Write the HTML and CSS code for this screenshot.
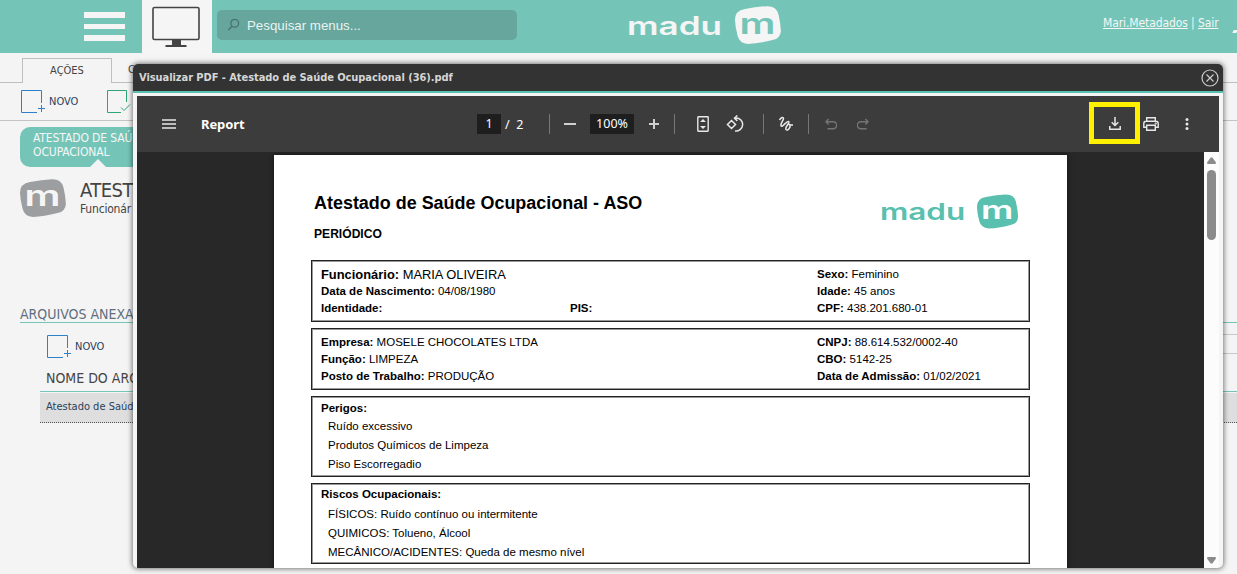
FILE: index.html
```html
<!DOCTYPE html>
<html lang="pt-BR">
<head>
    <meta charset="UTF-8">
    <meta name="viewport" content="width=device-width, initial-scale=1.0">
    <title>Madu</title>
    <link rel="stylesheet" href="styles.css">
</head>
<body>
    <header class="topbar">
        <div class="menu-button"><span></span><span></span><span></span></div>
        <div class="screen-tab">
            <svg width="48" height="41" viewBox="0 0 48 41">
                <rect x="1" y="1.500" width="46" height="32" rx="1.5" fill="none" stroke="#444" stroke-width="1.6"/>
                <path d="M20 33h9v6h5.500v2h-21v-2H20z" fill="#444"/>
            </svg>
        </div>
        <div class="search">
            <svg width="14" height="14" viewBox="0 0 14 14" fill="none" stroke="#49736d" stroke-width="1.300">
                <circle cx="7.700" cy="5.200" r="3.900"/>
                <path d="M5 8.200L1.300 12"/>
            </svg>
            <span>Pesquisar menus...</span>
        </div>
        <svg class="brand" width="156" height="42" viewBox="0 0 156 42">
            <text class="brand-word" x="0" y="28.500" textLength="95" lengthAdjust="spacingAndGlyphs">madu</text>
            <path d="M108 14Q108 4.500 118 3Q130 .6 140 .2Q149.500 0 151.500 8.500Q153.500 17 153.900 25Q153.500 32.500 145.500 34Q132 37.500 121 38Q112.500 37.500 110.500 29.500Q108.300 21 108 14z" fill="#f5f5f5"/>
            <text class="brand-m" x="112.500" y="27.500" textLength="36" lengthAdjust="spacingAndGlyphs">m</text>
        </svg>
        <div class="user-links"><a>Mari.Metadados</a> | <a>Sair</a></div>
        <span class="user-mark"></span>
    </header>

    <nav class="tabs">
        <div class="tab active">AÇÕES</div>
        <div class="tab">C</div>
    </nav>
    <div class="actions">
        <div class="action">
            <svg width="24" height="24" viewBox="0 0 24 24" fill="none" stroke="#2f80c8">
                <path d="M20.500 13V.5H.5v22H16M17 18.500h7M20.500 15v7"/>
            </svg>
            <span>NOVO</span>
        </div>
        <div class="action">
            <svg width="24" height="24" viewBox="0 0 24 24" fill="none" stroke="#2aa772">
                <path d="M19.500 12V.5H.5v22H14M14 17.500l3 3 6-6"/>
            </svg>
        </div>
    </div>

    <main class="content">
        <div class="step">ATESTADO DE SAÚ<br>OCUPACIONAL</div>
        <div class="record">
            <svg width="46" height="39" viewBox="108 0 46 39">
                <path d="M108 14Q108 4.500 118 3Q130 .6 140 .2Q149.500 0 151.500 8.500Q153.500 17 153.900 25Q153.500 32.500 145.500 34Q132 37.500 121 38Q112.500 37.500 110.500 29.500Q108.300 21 108 14z" fill="#9d9e9f"/>
                <text class="record-m" x="112.500" y="27" textLength="36" lengthAdjust="spacingAndGlyphs">m</text>
            </svg>
            <div>
                <div class="record-title">ATEST</div>
                <div class="record-sub">Funcionár</div>
            </div>
        </div>
        <h2 class="section-title">ARQUIVOS ANEXA</h2>
        <div class="panel-line"></div>
        <div class="files-actions">
            <svg width="24" height="24" viewBox="0 0 24 24" fill="none" stroke="#2f80c8">
                <path d="M20.500 13V.5H.5v22H16M17 18.500h7M20.500 15v7"/>
            </svg>
            <span>NOVO</span>
        </div>
        <div class="files">
            <div class="files-head">NOME DO ARQ</div>
            <div class="files-row">Atestado de Saúd</div>
        </div>
    </main>

    <div class="modal">
        <div class="modal-title">
            <span>Visualizar PDF - Atestado de Saúde Ocupacional (36).pdf</span>
            <svg width="18" height="18" viewBox="0 0 18 18" fill="none" stroke="#ccc" stroke-width="1.200">
                <circle cx="9" cy="9" r="8"/>
                <path d="M5.500 5.500l7 7M12.500 5.500l-7 7"/>
            </svg>
        </div>
        <div class="viewer">
            <div class="toolbar">
                <svg class="burger" width="14" height="10" viewBox="0 0 14 10" stroke="#e8e8e8" stroke-width="1.400">
                    <path d="M0 1h14M0 5h14M0 9h14"/>
                </svg>
                <span class="doc-name">Report</span>
                <div class="tools">
                    <span class="page-box">1</span>
                    <span class="page-total">/&nbsp; 2</span>
                    <i class="sep sep-page"></i>
                    <svg class="minus" width="12" height="12" viewBox="0 0 12 12" stroke="#d0d0d0" stroke-width="2"><path d="M0 6h12"/></svg>
                    <span class="zoom-box">100%</span>
                    <svg class="plus" width="12" height="12" viewBox="0 0 12 12" stroke="#d0d0d0" stroke-width="2"><path d="M1 6h10M6 1v10"/></svg>
                    <i class="sep sep-zoom"></i>
                    <svg class="fit" width="12" height="16" viewBox="0 0 12 16">
                        <rect x=".8" y=".8" width="10.400" height="14.400" rx=".6" fill="none" stroke="#e8e8e8" stroke-width="1.400"/>
                        <path d="M3 6l3-3 3 3zM3 10l3 3 3-3z" fill="#e8e8e8"/>
                    </svg>
                    <svg class="rotate" width="18" height="18" viewBox="0 0 18 18" fill="none" stroke="#e8e8e8" stroke-width="1.500">
                        <path d="M5.500 5.500l4 4-4 4-4-4zM8 3h2a6.500 6.500 0 1 1-1 12.900M11.300 .5L8.500 3.200l2.800 2.700"/>
                    </svg>
                    <i class="sep sep-rotate"></i>
                    <svg class="draw" width="16" height="16" viewBox="0 0 16 16" fill="none" stroke="#e8e8e8" stroke-width="1.500">
                        <path d="M1.500 4C3 1.500 5.500.5 5.500 2.500S2 8 3 9.800C4.500 12 8.500 4.500 10.500 5.500S6.500 11 8 13.500C10 15.500 13 11 11.800 8.500C10.500 7.500 9 9 15 9"/>
                    </svg>
                    <i class="sep sep-draw"></i>
                    <svg class="undo" width="12" height="12" viewBox="0 0 12 12" fill="none" stroke="#747474" stroke-width="1.400">
                        <path d="M3.700 1L1 3.800l2.700 2.700M1 3.800h7.200a3.400 3.400 0 0 1 0 6.900H2.500"/>
                    </svg>
                    <svg class="redo" width="12" height="12" viewBox="0 0 12 12" fill="none" stroke="#747474" stroke-width="1.400">
                        <path d="M8.300 1L11 3.800 8.300 6.500M11 3.800H3.800a3.400 3.400 0 0 0 0 6.900h5.700"/>
                    </svg>
                </div>
                <div class="download">
                    <svg width="12" height="13" viewBox="0 0 12 13" fill="none" stroke="#e8e8e8" stroke-width="1.500">
                        <path d="M6 0v8.500M2.700 5.200L6 8.500l3.300-3.300M.8 9v3.200h10.400V9"/>
                    </svg>
                </div>
                <svg class="print" width="16" height="14" viewBox="0 0 16 14" fill="none" stroke="#e8e8e8" stroke-width="1.400">
                    <path d="M3.700 4V.7h8.600V4M3.700 10.300H.8V6.500Q.8 4.200 3 4.200h10q2.200 0 2.200 2.300v3.800h-2.900M3.700 8.300h8.600v5H3.700z"/>
                    <circle cx="12.700" cy="6.500" r=".4"/>
                </svg>
                <svg class="more" width="4" height="12" viewBox="0 0 4 12" fill="#e8e8e8">
                    <circle cx="2" cy="1.500" r="1.500"/><circle cx="2" cy="6" r="1.500"/><circle cx="2" cy="10.500" r="1.500"/>
                </svg>
            </div>
            <div class="stage">
                <article class="sheet">
                    <div class="sheet-head">
                        <div>
                            <h1>Atestado de Saúde Ocupacional - ASO</h1>
                            <h3>PERIÓDICO</h3>
                        </div>
                        <svg class="sheet-logo" width="140" height="38" viewBox="0 0 156 42">
                            <text class="sheet-word" x="0" y="30.500" textLength="95" lengthAdjust="spacingAndGlyphs">madu</text>
                            <g transform="translate(0 2.500)">
                                <path d="M108 14Q108 4.500 118 3Q130 .6 140 .2Q149.500 0 151.500 8.500Q153.500 17 153.900 25Q153.500 32.500 145.500 34Q132 37.500 121 38Q112.500 37.500 110.500 29.500Q108.300 21 108 14z" fill="#59bfae"/>
                                <text class="sheet-m" x="112.500" y="27" textLength="36" lengthAdjust="spacingAndGlyphs">m</text>
                            </g>
                        </svg>
                    </div>
                    <section class="box person">
                        <p class="name"><b>Funcionário:</b> MARIA OLIVEIRA</p><p></p><p><b>Sexo:</b> Feminino</p>
                        <p><b>Data de Nascimento:</b> 04/08/1980</p><p></p><p><b>Idade:</b> 45 anos</p>
                        <p><b>Identidade:</b></p><p><b>PIS:</b></p><p><b>CPF:</b> 438.201.680-01</p>
                    </section>
                    <section class="box person">
                        <p><b>Empresa:</b> MOSELE CHOCOLATES LTDA</p><p></p><p><b>CNPJ:</b> 88.614.532/0002-40</p>
                        <p><b>Função:</b> LIMPEZA</p><p></p><p><b>CBO:</b> 5142-25</p>
                        <p><b>Posto de Trabalho:</b> PRODUÇÃO</p><p></p><p><b>Data de Admissão:</b> 01/02/2021</p>
                    </section>
                    <section class="box list">
                        <h4>Perigos:</h4>
                        <p>Ruído excessivo</p>
                        <p>Produtos Químicos de Limpeza</p>
                        <p>Piso Escorregadio</p>
                    </section>
                    <section class="box list risks">
                        <h4>Riscos Ocupacionais:</h4>
                        <p>FÍSICOS: Ruído contínuo ou intermitente</p>
                        <p>QUIMICOS: Tolueno, Álcool</p>
                        <p>MECÂNICO/ACIDENTES: Queda de mesmo nível</p>
                    </section>
                </article>
                <div class="scrollbar">
                    <svg width="9" height="7" viewBox="0 0 9 7" fill="#8b8b8b"><path d="M3.700.5h1.600L9 5.500 8.500 7h-8L0 5.500z"/></svg>
                    <span class="thumb"></span>
                    <svg class="down" width="9" height="7" viewBox="0 0 9 7" fill="#8b8b8b"><path d="M3.700 6.500h1.600L9 1.500 8.500 0h-8L0 1.500z"/></svg>
                </div>
            </div>
        </div>
    </div>
</body>
</html>
```
FILE: styles.css
```css
* {
    box-sizing: border-box;
}

body {
    margin: 0;
    height: 574px;
    overflow: hidden;
    background: #f4f4f4;
    font-family: "DejaVu Sans Condensed", "Noto Sans", sans-serif;
    font-size: 11px;
    color: #444;
}

svg {
    display: block;
    flex: none;
}

h1, h2, h3, h4, p {
    margin: 0;
}

/* header */
.topbar {
    display: flex;
    height: 53px;
    background: #74c5b8;
}

.menu-button {
    display: flex;
    flex-direction: column;
    gap: 6px;
    width: 41px;
    margin: 12px 17px 0 84px;
}

.menu-button span {
    height: 5.500px;
    background: #f5f5f5;
}

.screen-tab {
    width: 70px;
    padding: 6px 10px;
    background: #f5f5f5;
}

.search {
    display: flex;
    align-items: center;
    gap: 6px;
    width: 300px;
    height: 30px;
    margin: 10px 0 0 5px;
    padding-left: 10px;
    border-radius: 5px;
    background: #66a69d;
    color: #eaf3f1;
    font: 13.300px "Liberation Sans", sans-serif;
}

.brand {
    margin: 6px 0 0 110px;
}

.brand-word, .brand-m, .record-m, .sheet-word, .sheet-m {
    font-family: Inter, sans-serif;
    font-weight: 600;
    font-size: 25px;
    fill: #f5f5f5;
}

.brand-m {
    font-size: 28px;
    fill: #74c5b8;
}

.user-links {
    width: 117px;
    margin: 15px 0 0 auto;
    line-height: 16px;
    font-size: 12px;
    letter-spacing: -0.100px;
    white-space: nowrap;
    color: #f5f5f5;
}

.user-links a {
    text-decoration: underline;
}

.user-mark {
    width: 4px;
    height: 3px;
    margin: 30px 0 0 13px;
    background: #f5f5f5;
    transform: skewX(-25deg);
}

/* tabs and actions */
.tabs {
    display: flex;
    height: 30px;
    padding: 5px 0 0 22px;
    border-bottom: 1px solid #bfbfbf;
}

.tab {
    height: 25px;
    padding: 0 16px;
    line-height: 24px;
}

.tab.active {
    width: 90px;
    padding: 0;
    border: 1px solid #bfbfbf;
    border-bottom: none;
    background: #f4f4f4;
    text-align: center;
}

.actions {
    display: flex;
    gap: 29px;
    height: 38px;
    padding: 7px 0 0 21px;
    border-bottom: 1px solid #c4c4c4;
}

.action {
    display: flex;
    gap: 4px;
    color: #29415c;
    line-height: 23px;
}

/* content behind the window */
.content {
    padding: 6px 0 0 20px;
}

.step {
    width: 160px;
    height: 40px;
    padding: 4px 13px;
    border-radius: 10px;
    background: #74c5b8;
    clip-path: polygon(0 0, 100% 0, 100% 100%, 86px 100%, 78px 32px, 70px 100%, 0 100%);
    color: #f5f5f5;
    font-size: 12px;
    line-height: 14px;
    letter-spacing: -0.100px;
    white-space: nowrap;
}

.record {
    display: flex;
    gap: 14px;
    height: 140px;
    padding-top: 12px;
}

.record-m {
    font-size: 28px;
}

.record-title {
    margin-top: 1px;
    font-size: 20px;
    line-height: 21px;
    letter-spacing: -0.500px;
}

.record-sub {
    font-size: 12px;
    line-height: 16px;
    letter-spacing: -0.200px;
}

.section-title {
    height: 16px;
    border-bottom: 1px solid #74c5b8;
    font-size: 14px;
    font-weight: normal;
    line-height: 14px;
    color: #5f6f80;
}

/* grey frame that shows to the right of the window */
.panel-line {
    width: 30px;
    height: 20px;
    margin: 11px 0 -31px auto;
    border: solid #c8c8c8;
    border-width: 1px 0;
}

.files-actions {
    display: flex;
    gap: 4px;
    padding: 12px 0 0 27px;
    line-height: 23px;
    color: #29415c;
}

.files {
    margin: 10px 0 0 20px;
}

.files-head {
    height: 23px;
    padding-left: 6px;
    border-bottom: 1px solid #74c5b8;
    font-size: 14px;
    line-height: 19px;
}

.files-row {
    height: 30px;
    margin-top: 1px;
    padding-left: 6px;
    border-bottom: 1px dotted #555;
    background: #dedede;
    color: #29415c;
    line-height: 27px;
}

/* pdf window */
.modal {
    position: absolute;
    left: 133px;
    top: 64px;
    width: 1090px;
    height: 504px;
    border-radius: 5px;
    overflow: hidden;
    background: #f5f5f5;
    box-shadow: 0 0 5px 1px rgba(0, 0, 0, 0.500);
}

.modal-title {
    display: flex;
    justify-content: space-between;
    height: 29px;
    padding: 5px 4px 0 6px;
    border-bottom: 2px solid #59bfae;
    background: #333;
    color: #d6d6d6;
    font-weight: bold;
    line-height: 18px;
    letter-spacing: -0.060px;
}

.viewer {
    margin: 3px 4px 0 4px;
}

.toolbar {
    display: flex;
    align-items: center;
    height: 56px;
    padding-left: 25px;
    background: #3c3c3c;
    color: #fff;
}

.doc-name {
    width: 276px;
    margin-left: 25px;
    font: bold 13px "Noto Sans", sans-serif;
    letter-spacing: -0.100px;
}

.tools {
    display: flex;
    align-items: center;
    width: 612px;
    font: 12.500px "Noto Sans", sans-serif;
}

.page-box, .zoom-box {
    height: 20px;
    background: #1e1e1e;
    line-height: 20px;
    text-align: center;
}

.page-box {
    width: 24px;
}

.page-total {
    width: 48px;
    padding-left: 4px;
}

.zoom-box {
    width: 44px;
    margin: 0 14px 0 14px;
}

.sep {
    width: 1px;
    height: 20px;
    background: #777;
}

.sep-page {
    margin-right: 14px;
}

.sep-zoom {
    margin: 0 22px 0 14px;
}

.rotate {
    margin-left: 17px;
}

.sep-rotate {
    margin: 0 14px 0 19px;
}

.sep-draw {
    margin: 0 16px 0 14px;
}

.redo {
    margin-left: 20px;
}

.download {
    display: flex;
    align-items: center;
    justify-content: center;
    width: 51px;
    height: 42px;
    margin-top: -2px;
    border: 5px solid #fff000;
}

.print {
    margin-left: 3px;
}

.more {
    margin-left: 26px;
}

.stage {
    display: flex;
    justify-content: space-between;
    height: 416px;
    padding-left: 137px;
    overflow: hidden;
    background: #282828;
}

.sheet {
    width: 793px;
    height: 430px;
    margin-top: 3px;
    padding: 37px 37px 0;
    background: #fff;
    box-shadow: 0 0 5px #111;
    color: #000;
    font: 11.500px/17px "Liberation Sans", Arial, sans-serif;
}

.sheet-head {
    display: flex;
    justify-content: space-between;
    height: 68px;
    padding: 0 10px 0 3px;
}

.sheet h1 {
    font-size: 17.950px;
    line-height: 22px;
}

.sheet h3 {
    margin-top: 12px;
    font-size: 12.100px;
    line-height: 17px;
}

.sheet-word {
    fill: #59bfae;
}

.sheet-m {
    font-size: 28px;
    fill: #fff;
}

.box {
    width: 719px;
    margin-bottom: 6px;
    padding: 5px 9px;
    border: 1px solid #222;
    box-shadow: inset 0 0 0 1px #999;
}

.person {
    display: grid;
    grid-template-columns: 249px 247px 1fr;
    grid-auto-rows: 17px;
    height: 62px;
}

.person .name {
    font-size: 12.900px;
}

.list {
    height: 81px;
    padding-top: 2px;
}

.list h4 {
    font-size: 11.500px;
    line-height: 18px;
}

.list p {
    padding-left: 7px;
    line-height: 19px;
}

.risks {
    padding-top: 0;
}

.risks h4 {
    line-height: 21px;
}

.scrollbar {
    display: flex;
    flex-direction: column;
    align-items: center;
    width: 15px;
    height: 416px;
    padding-top: 5px;
    background: #fcfcfc;
}

.thumb {
    width: 9px;
    height: 70px;
    margin-top: 6px;
    border-radius: 5px;
    background: #8b8b8b;
}

.down {
    margin: auto 0 4px;
}
```
